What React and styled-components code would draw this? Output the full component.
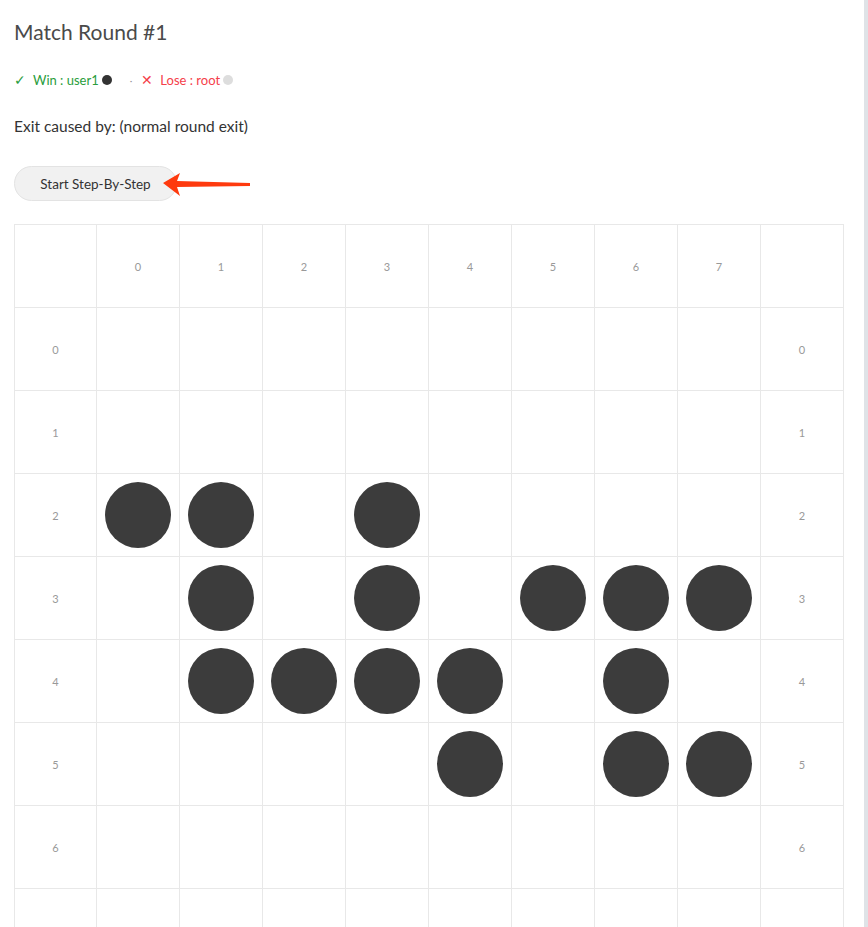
import React from "react";
import styled, { createGlobalStyle } from "styled-components";

const Global = createGlobalStyle`
  html, body { margin: 0; padding: 0; background: #fff; }
  body { font-family: "Lato", "Noto Sans", "Liberation Sans", sans-serif; color: #333; }
`;

const Page = styled.div`
  box-sizing: border-box;
  min-height: 100vh;
  width: 868px;
  border-right: 4px solid #dfe3e7;
  padding: 18px 0 0 14px;
  overflow: hidden;
`;

const Title = styled.h1`
  margin: 0;
  font-size: 21px;
  font-weight: 400;
  color: #4a4a4a;
  line-height: 28px;
`;

const Legend = styled.div`
  display: flex;
  align-items: center;
  margin-top: 25px;
  font-size: 13px;
  line-height: 18px;
`;

const Result = styled.span`
  display: inline-flex;
  align-items: center;
  color: ${(p) => p.$color};
`;

const Mark = styled.span`
  display: inline-block;
  width: 13px;
  margin-right: 6px;
  font-size: 14px;
`;

const Dot = styled.span`
  display: inline-block;
  width: 10px;
  height: 10px;
  border-radius: 50%;
  margin-left: 3px;
  background: ${(p) => p.$color};
`;

const Sep = styled.span`
  color: #999;
  margin: 0 9px 0 18px;
  font-size: 10px;
`;

const Exit = styled.p`
  margin: 27px 0 0;
  font-size: 15.5px;
  line-height: 20px;
  color: #333;
`;

const ButtonRow = styled.div`
  display: flex;
  align-items: center;
  margin-top: 30px;
  position: relative;
`;

const Button = styled.button`
  box-sizing: border-box;
  width: 163px;
  height: 35px;
  border-radius: 18px;
  border: 1px solid #e3e3e3;
  background: #f1f1f1;
  font-family: inherit;
  font-size: 13.5px;
  color: #333;
  cursor: pointer;
  padding: 0;
`;

const Arrow = styled.svg`
  position: absolute;
  left: 133px;
  top: 3px;
`;

const Board = styled.div`
  margin-top: 23px;
  display: grid;
  grid-template-columns: 82px repeat(9, 83px);
  grid-auto-rows: 83px;
  border-left: 1px solid #e8e8e8;
  border-top: 1px solid #e8e8e8;
  width: 829px;
`;

const Cell = styled.div`
  box-sizing: border-box;
  border-right: 1px solid #e8e8e8;
  border-bottom: 1px solid #e8e8e8;
  display: flex;
  align-items: center;
  justify-content: center;
  font-size: 11px;
  color: #999;
`;

const Stone = styled.div`
  width: 66px;
  height: 66px;
  border-radius: 50%;
  background: #3c3c3c;
`;

const stones = new Set([
  "2-0", "2-1", "2-3",
  "3-1", "3-3", "3-5", "3-6", "3-7",
  "4-1", "4-2", "4-3", "4-4", "4-6",
  "5-4", "5-6", "5-7",
]);

const cols = [0, 1, 2, 3, 4, 5, 6, 7];
const rows = [0, 1, 2, 3, 4, 5, 6, 7];

export default function App() {
  return (
    <>
      <Global />
      <Page>
        <Title>Match Round #1</Title>
        <Legend>
          <Result $color="#2a9d3c">
            <Mark>✓</Mark>Win : user1<Dot $color="#333" />
          </Result>
          <Sep>·</Sep>
          <Result $color="#f5404a">
            <Mark>✕</Mark>Lose : root<Dot $color="#ddd" />
          </Result>
        </Legend>
        <Exit>Exit caused by: (normal round exit)</Exit>
        <ButtonRow>
          <Button>Start Step-By-Step</Button>
          <Arrow width="106" height="30" viewBox="0 0 106 30">
            <path d="M16 14 L33 4 L30 12 L103 14 L103 17 L30 18 L33 27 Z" fill="#fe3a0e" />
          </Arrow>
        </ButtonRow>
        <Board>
          <Cell />
          {cols.map((c) => (
            <Cell key={"h" + c}>{c}</Cell>
          ))}
          <Cell />
          {rows.map((r) => (
            <React.Fragment key={r}>
              <Cell>{r}</Cell>
              {cols.map((c) => (
                <Cell key={c}>{stones.has(`${r}-${c}`) ? <Stone /> : null}</Cell>
              ))}
              <Cell>{r}</Cell>
            </React.Fragment>
          ))}
        </Board>
      </Page>
    </>
  );
}
